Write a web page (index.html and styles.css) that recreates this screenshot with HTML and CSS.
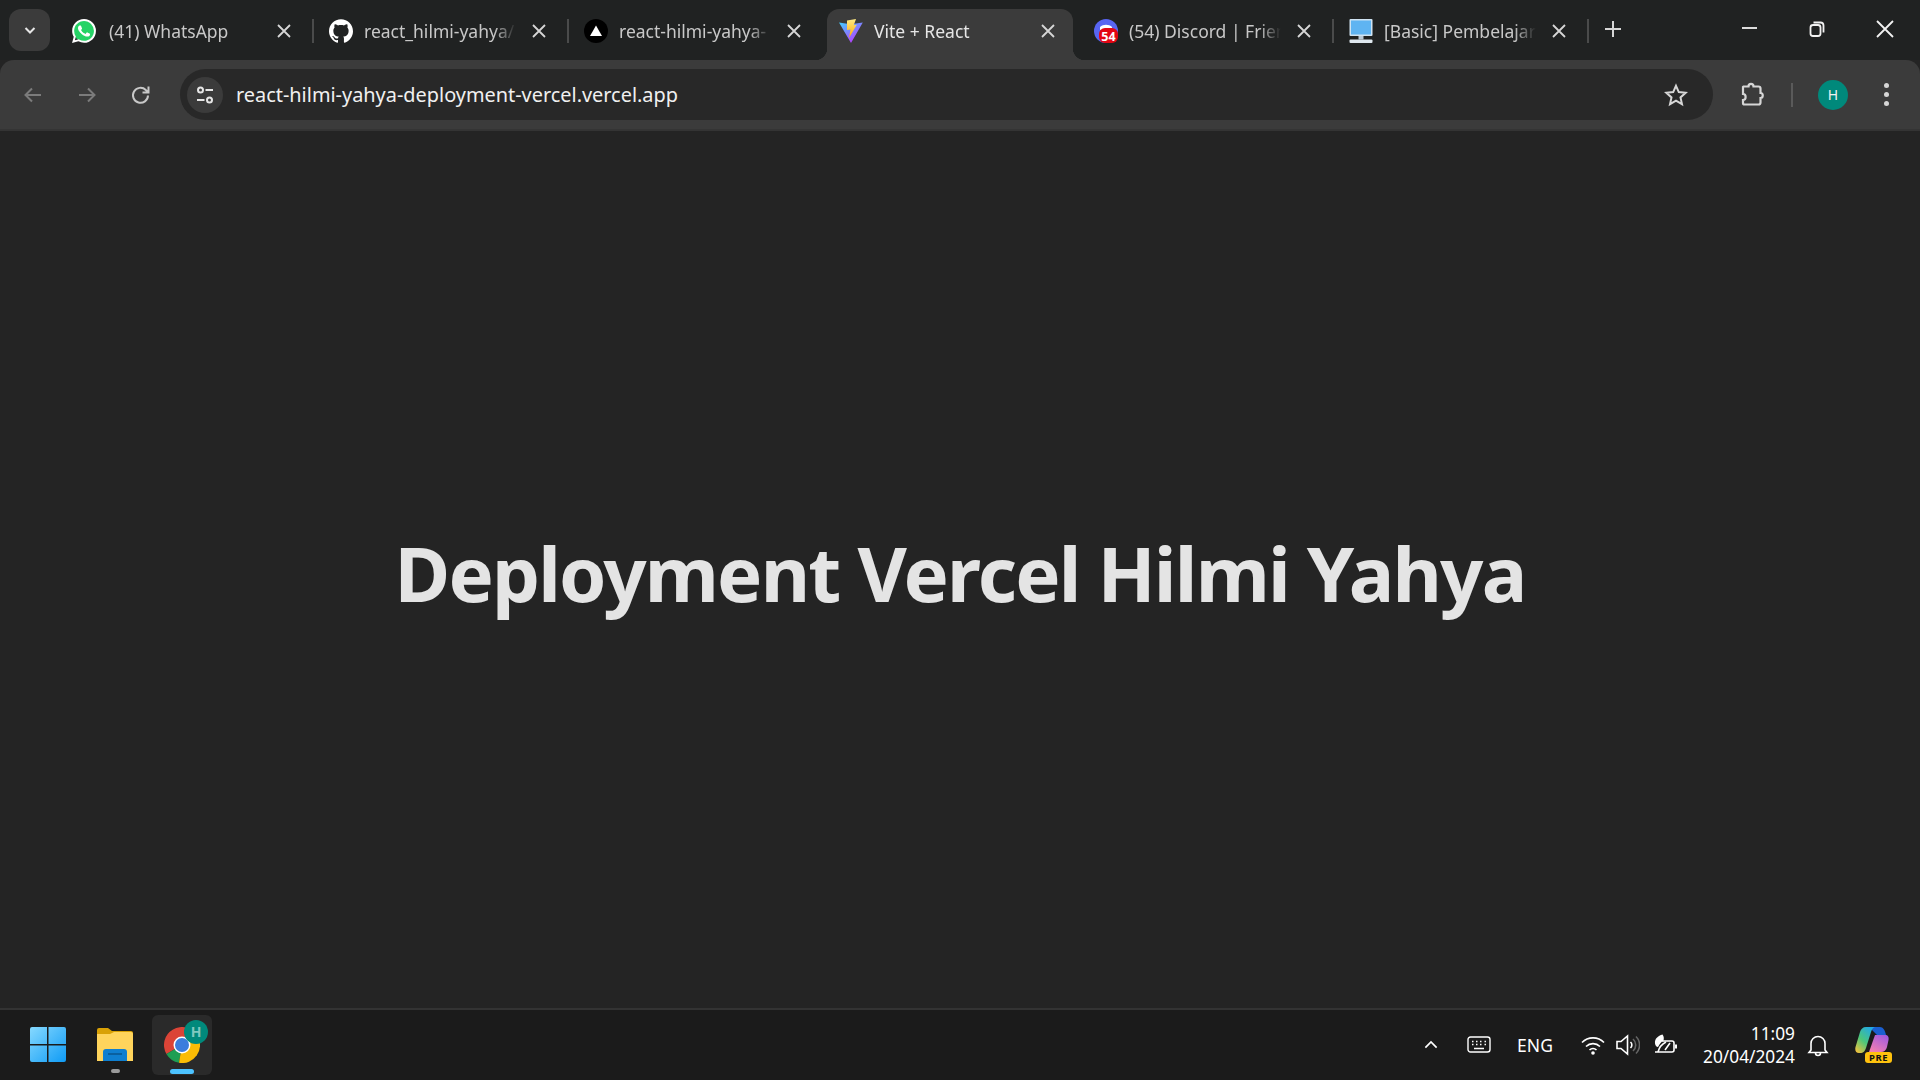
FILE: index.html
```html
<!DOCTYPE html>
<html lang="en">
<head>
  <meta charset="UTF-8" />
  <title>Vite + React</title>
  <link rel="stylesheet" href="styles.css">
</head>
<body>
  <div class="tabstrip">
    <button class="tab-search">
      <svg width="14" height="14" viewBox="0 0 14 14"><path d="M2.500 5l4.500 4.500L11.500 5" fill="none" stroke="#e6e6e6" stroke-width="2"/></svg>
    </button>

    <div class="tab tab-first">
      <svg class="favicon" viewBox="0 0 24 24">
        <circle cx="12" cy="12" r="10.500" fill="#25d366"/>
        <path fill="#fff" d="M17.472 14.382c-.297-.149-1.758-.867-2.03-.967-.273-.099-.471-.148-.67.15-.197.297-.767.966-.94 1.164-.173.199-.347.223-.644.075-.297-.15-1.255-.463-2.39-1.475-.883-.788-1.48-1.761-1.653-2.059-.173-.297-.018-.458.13-.606.134-.133.298-.347.446-.52.149-.174.198-.298.298-.497.099-.198.05-.371-.025-.52-.075-.149-.669-1.612-.916-2.207-.242-.579-.487-.5-.669-.51-.173-.008-.371-.01-.57-.01-.198 0-.52.074-.792.372-.272.297-1.04 1.016-1.04 2.479 0 1.462 1.065 2.875 1.213 3.074.149.198 2.096 3.2 5.077 4.487.709.306 1.262.489 1.694.625.712.227 1.36.195 1.871.118.571-.085 1.758-.719 2.006-1.413.248-.694.248-1.289.173-1.413-.074-.124-.272-.198-.57-.347m-5.421 7.403h-.004a9.87 9.87 0 01-5.031-1.378l-.361-.214-3.741.982.998-3.648-.235-.374a9.86 9.86 0 01-1.51-5.26c.001-5.45 4.436-9.884 9.888-9.884 2.64 0 5.122 1.03 6.988 2.898a9.825 9.825 0 012.893 6.994c-.003 5.45-4.437 9.884-9.885 9.884m8.413-18.297A11.815 11.815 0 0012.05 0C5.495 0 .16 5.335.157 11.892c0 2.096.547 4.142 1.588 5.945L.057 24l6.305-1.654a11.882 11.882 0 005.683 1.448h.005c6.554 0 11.89-5.335 11.893-11.893a11.821 11.821 0 00-3.48-8.413z"/>
      </svg>
      <span class="tab-title">(41) WhatsApp</span>
      <svg class="tab-close" viewBox="0 0 20 20"><path d="M4 4l12 12M16 4L4 16"/></svg>
    </div>
    <span class="tab-sep"></span>

    <div class="tab">
      <svg class="favicon" viewBox="0 0 24 24">
        <path fill="#fff" d="M12 .297c-6.63 0-12 5.373-12 12 0 5.303 3.438 9.8 8.205 11.385.6.113.82-.258.82-.577 0-.285-.01-1.04-.015-2.04-3.338.724-4.042-1.61-4.042-1.61C4.422 18.07 3.633 17.7 3.633 17.7c-1.087-.744.084-.729.084-.729 1.205.084 1.838 1.236 1.838 1.236 1.07 1.835 2.809 1.305 3.495.998.108-.776.417-1.305.76-1.605-2.665-.3-5.466-1.332-5.466-5.93 0-1.31.465-2.38 1.235-3.22-.135-.303-.54-1.523.105-3.176 0 0 1.005-.322 3.3 1.23.96-.267 1.98-.399 3-.405 1.02.006 2.04.138 3 .405 2.28-1.552 3.285-1.23 3.285-1.23.645 1.653.24 2.873.12 3.176.765.84 1.23 1.91 1.23 3.22 0 4.61-2.805 5.625-5.475 5.92.42.36.81 1.096.81 2.22 0 1.606-.015 2.896-.015 3.286 0 .315.21.69.825.57C20.565 22.092 24 17.592 24 12.297c0-6.627-5.373-12-12-12"/>
      </svg>
      <span class="tab-title">react_hilmi-yahya/</span>
      <svg class="tab-close" viewBox="0 0 20 20"><path d="M4 4l12 12M16 4L4 16"/></svg>
    </div>
    <span class="tab-sep"></span>

    <div class="tab">
      <svg class="favicon" viewBox="0 0 24 24">
        <circle cx="12" cy="12" r="12" fill="#000"/>
        <path fill="#fff" d="M12 6.500l6 10.500H6z"/>
      </svg>
      <span class="tab-title">react-hilmi-yahya-</span>
      <svg class="tab-close" viewBox="0 0 20 20"><path d="M4 4l12 12M16 4L4 16"/></svg>
    </div>
    <span class="tab-sep tab-sep-off"></span>

    <div class="tab tab-active">
      <svg class="favicon" viewBox="0 0 24 24">
        <defs>
          <linearGradient id="vite-a" x1="0" y1="0" x2="0.7" y2="1">
            <stop offset="0" stop-color="#41d1ff"/>
            <stop offset="1" stop-color="#bd34fe"/>
          </linearGradient>
          <linearGradient id="vite-b" x1="0" y1="0" x2="0" y2="1">
            <stop offset="0" stop-color="#ffea83"/>
            <stop offset="1" stop-color="#ffa800"/>
          </linearGradient>
        </defs>
        <path fill="url(#vite-a)" d="M0 3.500l6.500 1 5.500 0.800 11.800-1.900L12 24z"/>
        <path fill="url(#vite-b)" d="M8 1.500L17 0l-2.200 6.200 3-0.500L10 19l1.500-8.500-3.500 0.500z"/>
      </svg>
      <span class="tab-title">Vite + React</span>
      <svg class="tab-close" viewBox="0 0 20 20"><path d="M4 4l12 12M16 4L4 16"/></svg>
    </div>
    <span class="tab-sep tab-sep-off"></span>

    <div class="tab">
      <svg class="favicon" viewBox="0 0 24 24">
        <circle cx="12" cy="12" r="12" fill="#5865f2"/>
        <path fill="#fff" d="M6 8c3-3 9-3 12 0v3H6z"/>
        <rect x="5" y="9" width="19" height="15" rx="6" fill="#e30613"/>
        <text x="14.500" y="21.500" class="favicon-badge" text-anchor="middle">54</text>
      </svg>
      <span class="tab-title">(54) Discord | Frien</span>
      <svg class="tab-close" viewBox="0 0 20 20"><path d="M4 4l12 12M16 4L4 16"/></svg>
    </div>
    <span class="tab-sep"></span>

    <div class="tab">
      <svg class="favicon" viewBox="0 0 24 24">
        <rect x="0.500" y="0" width="23" height="17" rx="1" fill="#cfe3f2"/>
        <rect x="2" y="1.500" width="20" height="14" fill="#5fb4f2"/>
        <rect x="9.500" y="17" width="5" height="3.500" fill="#b9c9d6"/>
        <rect x="0.500" y="20.500" width="23" height="3.500" rx="1" fill="#dfe8ef"/>
      </svg>
      <span class="tab-title">[Basic] Pembelajar</span>
      <svg class="tab-close" viewBox="0 0 20 20"><path d="M4 4l12 12M16 4L4 16"/></svg>
    </div>
    <span class="tab-sep"></span>

    <svg class="new-tab" viewBox="0 0 20 20"><path d="M10 2v16M2 10h16"/></svg>

    <div class="window-controls">
      <svg class="win-btn" viewBox="0 0 20 20"><path d="M3 9h15"/></svg>
      <svg class="win-btn" viewBox="0 0 20 20"><rect x="3.500" y="6" width="10" height="11" rx="2.500"/><path d="M6.500 3.500h7a3 3 0 013 3v7"/></svg>
      <svg class="win-btn" viewBox="0 0 20 20"><path d="M2 2l16 16M18 2L2 18"/></svg>
    </div>
  </div>

  <div class="toolbar">
    <svg class="nav-btn nav-off" viewBox="0 0 24 24"><path d="M20 12H5M11 5.500L4.500 12l6.500 6.500"/></svg>
    <svg class="nav-btn nav-off" viewBox="0 0 24 24"><path d="M4 12h15M13 5.500l6.500 6.500-6.500 6.500"/></svg>
    <svg class="nav-btn" viewBox="0 0 24 24"><path d="M19 12.500a7.500 7.500 0 11-2.200-5.500L19.500 9.500M19.500 3.500v6h-6"/></svg>

    <div class="omnibox">
      <span class="site-info">
        <svg width="20" height="20" viewBox="0 0 20 20" fill="none" stroke="#e6e6e6" stroke-width="2">
          <circle cx="5.500" cy="5" r="2.500"/><path d="M10.500 5H18M2 15h7.500"/><circle cx="14.500" cy="15" r="2.500"/>
        </svg>
      </span>
      <span class="url">react-hilmi-yahya-deployment-vercel.vercel.app</span>
      <svg class="star" viewBox="0 0 24 24"><path d="M12 2.800l2.800 6.300 6.900.7-5.200 4.600 1.500 6.800-6-3.500-6 3.500 1.500-6.800-5.200-4.600 6.900-.7z"/></svg>
    </div>

    <svg class="puzzle" viewBox="0 0 26 26"><path d="M4.500 4.500h5c0-3.500 5-3.500 5 0h5a2 2 0 012 2v4.500c3 0 3 5 0 5v4.500a2 2 0 01-2 2H5.500a1.500 1.500 0 01-1.500-1.500V18c3.500 0 3.500-6 0-6V5z"/></svg>
    <span class="toolbar-sep"></span>
    <span class="avatar">H</span>
    <span class="menu-dots"><i></i><i></i><i></i></span>
  </div>

  <main class="page">
    <h1 class="headline">Deployment Vercel Hilmi Yahya</h1>
  </main>

  <footer class="taskbar">
    <div class="task-tile">
      <svg width="36" height="36" viewBox="0 0 36 36">
        <defs>
          <linearGradient id="win-a" x1="0" y1="0" x2="1" y2="1">
            <stop offset="0" stop-color="#86d9ff"/><stop offset="1" stop-color="#0f9bf5"/>
          </linearGradient>
        </defs>
        <path fill="url(#win-a)" d="M0 2a2 2 0 012-2h15v17H0zM18.500 0H34a2 2 0 012 2v15H18.500zM0 18.500h17V35H2a2 2 0 01-2-2zM18.500 18.500H36V33a2 2 0 01-2 2H18.500z"/>
      </svg>
    </div>
    <div class="task-tile">
      <svg width="36" height="33" viewBox="0 0 36 33">
        <path fill="#d9a106" d="M0 2a2 2 0 012-2h9l4 3h19a2 2 0 012 2v6H0z"/>
        <path fill="#ffd45c" d="M0 6h13l4-2h17a2 2 0 012 2v27H0z"/>
        <path fill="#0f7fd0" d="M6 24a3 3 0 013-3h18a3 3 0 013 3v9H6z"/>
        <path stroke="#0a568f" stroke-width="1.500" d="M11 26h14"/>
      </svg>
      <span class="task-pip"></span>
    </div>
    <div class="task-tile task-tile-on">
      <svg width="36" height="36" viewBox="0 0 36 36">
        <path fill="#db4437" d="M18 18L2.400 27A18 18 0 0133.600 9z"/>
        <path fill="#1e9e53" d="M18 18L2.400 27A18 18 0 0015 35.800z"/>
        <path fill="#fbbc05" d="M18 18L33.600 9A18 18 0 0115 35.800z"/>
        <circle cx="18" cy="18" r="8.500" fill="#fff"/>
        <circle cx="18" cy="18" r="7" fill="#3b7ddd"/>
      </svg>
      <span class="chrome-badge">H</span>
      <span class="task-pill"></span>
    </div>

    <div class="tray">
      <svg class="tray-icon tray-chevron" viewBox="0 0 24 24"><path d="M4.500 15.500L12 8l7.500 7.500"/></svg>
      <svg class="tray-icon tray-keyboard" viewBox="0 0 24 18"><rect x="1" y="1" width="22" height="15" rx="2.500"/><path d="M5 5.500h1.500M9 5.500h1.500M13 5.500h1.500M17.500 5.500H19M5 8.500h1.500M9 8.500h1.500M13 8.500h1.500M17.500 8.500H19M7 12.500h10"/></svg>
      <span class="tray-lang">ENG</span>
      <svg class="tray-icon tray-wifi" viewBox="0 0 24 24"><path d="M1 9.500a15.500 15.500 0 0122 0M5 13.500a10 10 0 0114 0M8.500 17a5 5 0 017 0"/><circle cx="12" cy="20" r="1.800" fill="#fff" stroke="none"/></svg>
      <svg class="tray-icon tray-volume" viewBox="0 0 24 24"><path d="M1 8.500h4L11.500 3v18L5 15.500H1z"/><path d="M14.500 9a4 4 0 010 6"/><path class="tray-dim" d="M17 6a8 8 0 010 12M20 3.500a12 12 0 010 17"/></svg>
      <svg class="tray-icon tray-battery" viewBox="0 0 24 24">
        <path d="M9 8h10a2 2 0 012 2v7a2 2 0 01-2 2H2"/>
        <path d="M23 11.500v4" stroke-width="2"/>
        <path fill="#fff" stroke="none" d="M9.500 1.500C5 3 1.500 5.500 2 10.500c.2 2 1.500 3.300 3 3.500 1.500-3 3-5 5.500-6.500 .5-2 .5-4 -1-6z"/>
        <path d="M5 19c1-4 4-8 8-10M12 17l5-7"/>
      </svg>
      <div class="clock">
        <span>11:09</span>
        <span>20/04/2024</span>
      </div>
      <svg class="tray-icon tray-bell" viewBox="0 0 24 24"><path d="M5 17V10.500a7 7 0 0114 0V17l2 2.500H3zM9.500 20a2.500 2.500 0 005 0"/></svg>
      <div class="copilot">
        <svg width="34" height="27" viewBox="0 0 34 27">
          <defs>
            <linearGradient id="cop-a" x1="0.100" y1="1" x2="0.800" y2="0">
              <stop offset="0" stop-color="#f5c13c"/><stop offset="0.450" stop-color="#4cc77a"/><stop offset="1" stop-color="#1fa6ee"/>
            </linearGradient>
            <linearGradient id="cop-b" x1="0.200" y1="1" x2="0.800" y2="0">
              <stop offset="0" stop-color="#f57fb0"/><stop offset="1" stop-color="#a05be0"/>
            </linearGradient>
          </defs>
          <path fill="#1b5fd0" d="M14 0h11c3 0 5 3 6 8H22z"/>
          <path fill="url(#cop-b)" d="M20 8h10c3 0 4 2 3.500 5l-1.500 7c-.7 3-3 5-6 5H14z"/>
          <path fill="url(#cop-a)" d="M11 0h10c-3 0-4 2-5 5l-5 16c-1 3-2.500 5-6 5H4c-3 0-4.300-2.500-3.500-6L5 5c.8-3 3-5 6-5z"/>
        </svg>
        <span class="copilot-pre">PRE</span>
      </div>
    </div>
  </footer>
</body>
</html>
```

FILE: styles.css
```css
* {
  box-sizing: border-box;
}
body {
  margin: 0;
  height: 100vh;
  display: flex;
  flex-direction: column;
  overflow: hidden;
  background: #242424;
  color: #e6e6e6;
  font-family: "Noto Sans", "Open Sans", sans-serif;
}

/* tab strip */
.tabstrip {
  height: 60px;
  flex: none;
  display: flex;
  align-items: flex-end;
  background: #202222;
}
.tab-search {
  width: 41px;
  height: 42px;
  margin: 0 9px 9px 9px;
  padding: 0;
  border: 0;
  border-radius: 12px;
  background: #3b3b3b;
  display: flex;
  align-items: center;
  justify-content: center;
}
.tab {
  position: relative;
  width: 253px;
  height: 51px;
  padding: 0 18px 7px 15px;
  display: flex;
  align-items: center;
  color: #c8c8c8;
  font-size: 17.500px;
}
.tab-first .favicon {
  margin-left: -2px;
  margin-right: 2px;
}
.tab-active {
  width: 246px;
  margin: 0 4px 0 3px;
  padding-left: 12px;
  padding-right: 15px;
  background: #3b3b3b;
  border-radius: 12px 12px 0 0;
  color: #e6e6e6;
}
.tab-active::before,
.tab-active::after {
  content: "";
  position: absolute;
  bottom: 0;
  width: 12px;
  height: 12px;
  background: radial-gradient(circle at 0 0, transparent 12px, #3b3b3b 12.500px);
}
.tab-active::before {
  left: -12px;
}
.tab-active::after {
  right: -12px;
  background: radial-gradient(circle at 100% 0, transparent 12px, #3b3b3b 12.500px);
}
.favicon {
  width: 24px;
  height: 24px;
  flex: none;
}
.favicon-badge {
  fill: #fff;
  font-size: 12.500px;
  font-weight: 700;
}
.tab-title {
  flex: 1;
  min-width: 0;
  margin: 0 13px 0 11px;
  white-space: nowrap;
  overflow: hidden;
  mask-image: linear-gradient(to left, transparent 0, #000 22px);
}
.tab-close {
  width: 20px;
  height: 20px;
  flex: none;
  fill: none;
  stroke: #d6d6d6;
  stroke-width: 1.800;
}
.tab-sep {
  width: 2px;
  height: 24px;
  margin-bottom: 17px;
  background: #4a4b4b;
}
.tab-sep-off {
  background: transparent;
}
.new-tab {
  width: 20px;
  height: 20px;
  margin: 0 0 21px 14px;
  fill: none;
  stroke: #d6d6d6;
  stroke-width: 2;
}
.window-controls {
  margin-left: auto;
  margin-bottom: 21px;
  padding-right: 25px;
  display: flex;
  gap: 48px;
}
.win-btn {
  width: 20px;
  height: 20px;
  fill: none;
  stroke: #f2f2f2;
  stroke-width: 1.800;
}

/* toolbar */
.toolbar {
  height: 71px;
  flex: none;
  padding: 0 23px 0 21px;
  display: flex;
  align-items: center;
  background: #3b3b3b;
  border-bottom: 2px solid #343434;
  border-radius: 14px 14px 0 0;
}
.nav-btn {
  width: 24px;
  height: 24px;
  margin-right: 30px;
  fill: none;
  stroke: #c8c8c8;
  stroke-width: 2;
}
.nav-off {
  stroke: #7b7b7b;
}
.omnibox {
  width: 1533px;
  height: 51px;
  margin-left: -3px;
  margin-right: 26px;
  padding: 0 25px 0 7px;
  flex: none;
  display: flex;
  align-items: center;
  background: #282828;
  border-radius: 26px;
}
.site-info {
  width: 36px;
  height: 36px;
  flex: none;
  display: flex;
  align-items: center;
  justify-content: center;
  background: #3b3b3b;
  border-radius: 50%;
}
.url {
  flex: 1;
  margin-left: 13px;
  color: #f0f0f0;
  font-size: 19.900px;
}
.star {
  width: 24px;
  height: 24px;
  fill: none;
  stroke: #d6d6d6;
  stroke-width: 2;
}
.puzzle {
  width: 26px;
  height: 26px;
  flex: none;
  fill: none;
  stroke: #d6d6d6;
  stroke-width: 2.200;
}
.toolbar-sep {
  width: 2px;
  height: 24px;
  margin-left: 26px;
  background: #5a5a5a;
}
.avatar {
  width: 30px;
  height: 30px;
  margin-left: 25px;
  border-radius: 50%;
  display: flex;
  align-items: center;
  justify-content: center;
  background: #00897b;
  color: #f0f0f0;
  font-size: 14px;
}
.menu-dots {
  margin-left: 36px;
  display: flex;
  flex-direction: column;
  gap: 4px;
}
.menu-dots i {
  width: 5px;
  height: 5px;
  border-radius: 50%;
  background: #d6d6d6;
}

/* page */
.page {
  flex: 1;
  display: flex;
  align-items: center;
  justify-content: center;
  padding-top: 6px;
  background: #242424;
}
.headline {
  margin: 0;
  color: #e4e4e4;
  font-size: 76px;
  font-weight: 700;
  line-height: 1.1;
  letter-spacing: -1.800px;
}

/* taskbar */
.taskbar {
  height: 72px;
  flex: none;
  padding-left: 18px;
  padding-bottom: 1px;
  display: flex;
  align-items: center;
  gap: 7px;
  background: #1b1b1b;
  border-top: 2px solid #333;
}
.task-tile {
  position: relative;
  width: 60px;
  height: 60px;
  display: flex;
  align-items: center;
  justify-content: center;
  border-radius: 6px;
}
.task-tile-on {
  background: #2a2a2a;
}
.task-pip {
  position: absolute;
  left: 26px;
  bottom: 2px;
  width: 9px;
  height: 4px;
  border-radius: 2px;
  background: #9a9a9a;
}
.task-pill {
  position: absolute;
  left: 18px;
  bottom: 1px;
  width: 24px;
  height: 5px;
  border-radius: 3px;
  background: #4cc2ff;
}
.chrome-badge {
  position: absolute;
  left: 32px;
  top: 5px;
  width: 24px;
  height: 24px;
  border-radius: 50%;
  display: flex;
  align-items: center;
  justify-content: center;
  background: #00897b;
  color: #7fc8bf;
  font-size: 14px;
  font-weight: 700;
}
.tray {
  margin-left: auto;
  padding-right: 29px;
  display: flex;
  align-items: center;
  color: #fff;
}
.tray-icon {
  flex: none;
  fill: none;
  stroke: #fff;
  stroke-width: 1.600;
}
.tray-chevron {
  width: 18px;
  height: 18px;
  stroke-width: 2.200;
  margin-right: 27px;
}
.tray-keyboard {
  width: 24px;
  height: 18px;
  margin-right: 18px;
  stroke-width: 1.400;
}
.tray-lang {
  width: 52px;
  margin-right: 20px;
  text-align: center;
  font-size: 17.500px;
}
.tray-wifi {
  width: 24px;
  height: 24px;
  margin-right: 11px;
}
.tray-volume {
  width: 24px;
  height: 24px;
  margin-right: 13px;
}
.tray-dim {
  stroke: #666;
}
.tray-battery {
  width: 24px;
  height: 24px;
}
.clock {
  width: 118px;
  display: flex;
  flex-direction: column;
  align-items: flex-end;
  font-size: 17.300px;
  line-height: 23px;
}
.tray-bell {
  width: 24px;
  height: 24px;
  margin-left: 11px;
  margin-right: 25px;
}
.copilot {
  position: relative;
  width: 36px;
  height: 36px;
}
.copilot-pre {
  position: absolute;
  right: -1px;
  bottom: 0;
  width: 27px;
  height: 11px;
  border-radius: 3px;
  display: flex;
  align-items: center;
  justify-content: center;
  background: #ffc20e;
  color: #111;
  font-size: 9.500px;
  font-weight: 700;
  letter-spacing: 0.500px;
}
```
